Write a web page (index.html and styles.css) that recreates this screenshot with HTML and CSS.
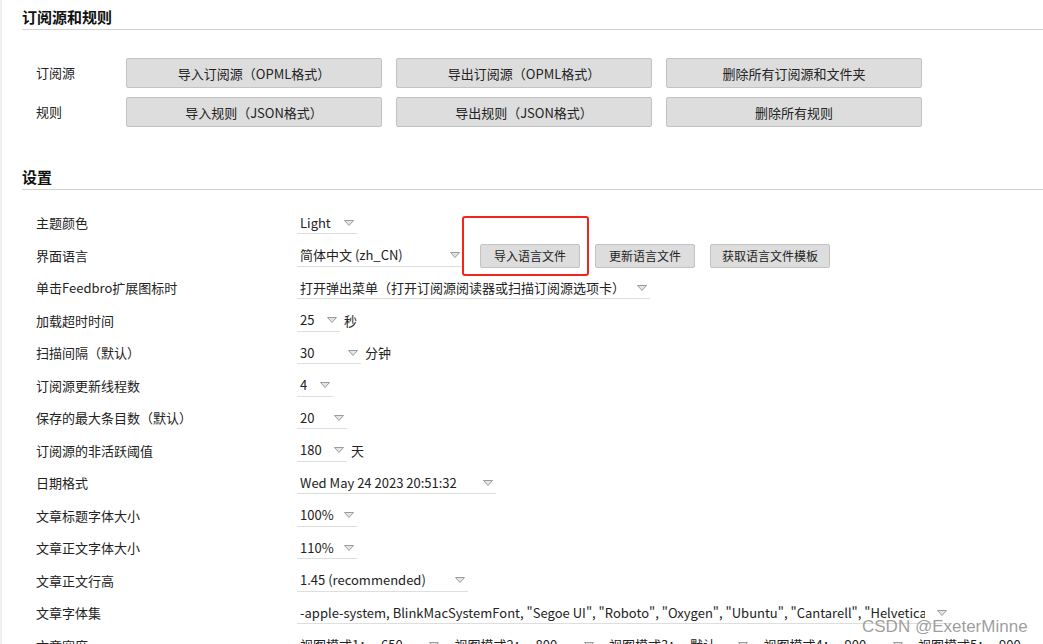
FILE: index.html
```html
<!DOCTYPE html>
<html lang="zh-CN">
<head>
<meta charset="utf-8">
<title>Feedbro 设置</title>
<link rel="stylesheet" href="styles.css">
</head>
<body>
<div class="page">
  <h2 class="section-title">订阅源和规则</h2>
  <div class="io-grid">
    <div class="io-label">订阅源</div>
    <button class="btn btn-lg">导入订阅源（OPML格式）</button>
    <button class="btn btn-lg">导出订阅源（OPML格式）</button>
    <button class="btn btn-lg">删除所有订阅源和文件夹</button>
    <div class="io-label">规则</div>
    <button class="btn btn-lg">导入规则（JSON格式）</button>
    <button class="btn btn-lg">导出规则（JSON格式）</button>
    <button class="btn btn-lg">删除所有规则</button>
  </div>

  <h2 class="section-title section-title--next">设置</h2>
  <div class="settings">
    <div class="row">
      <div class="label">主题颜色</div>
      <div class="ctrl">
        <div class="select w-60"><span class="val">Light</span><svg class="caret" width="10" height="6" viewBox="0 0 10 6"><path d="M0.5 0.5H9.5L5 5.5Z" fill="#e4e4e4" stroke="#9c9c9c"/></svg></div>
      </div>
    </div>
    <div class="row">
      <div class="label">界面语言</div>
      <div class="ctrl">
        <div class="select w-166"><span class="val">简体中文 (zh_CN)</span><svg class="caret" width="10" height="6" viewBox="0 0 10 6"><path d="M0.5 0.5H9.5L5 5.5Z" fill="#e4e4e4" stroke="#9c9c9c"/></svg></div>
        <div class="lang-btns">
          <button class="btn btn-sm">导入语言文件</button>
          <button class="btn btn-sm">更新语言文件</button>
          <button class="btn btn-sm">获取语言文件模板</button>
        </div>
      </div>
    </div>
    <div class="row">
      <div class="label">单击Feedbro扩展图标时</div>
      <div class="ctrl">
        <div class="select w-353"><span class="val">打开弹出菜单（打开订阅源阅读器或扫描订阅源选项卡）</span><svg class="caret" width="10" height="6" viewBox="0 0 10 6"><path d="M0.5 0.5H9.5L5 5.5Z" fill="#e4e4e4" stroke="#9c9c9c"/></svg></div>
      </div>
    </div>
    <div class="row">
      <div class="label">加载超时时间</div>
      <div class="ctrl">
        <div class="select w-43"><span class="val">25</span><svg class="caret" width="10" height="6" viewBox="0 0 10 6"><path d="M0.5 0.5H9.5L5 5.5Z" fill="#e4e4e4" stroke="#9c9c9c"/></svg></div>
        <span class="unit">秒</span>
      </div>
    </div>
    <div class="row">
      <div class="label">扫描间隔（默认）</div>
      <div class="ctrl">
        <div class="select w-64"><span class="val">30</span><svg class="caret" width="10" height="6" viewBox="0 0 10 6"><path d="M0.5 0.5H9.5L5 5.5Z" fill="#e4e4e4" stroke="#9c9c9c"/></svg></div>
        <span class="unit">分钟</span>
      </div>
    </div>
    <div class="row">
      <div class="label">订阅源更新线程数</div>
      <div class="ctrl">
        <div class="select w-36"><span class="val">4</span><svg class="caret" width="10" height="6" viewBox="0 0 10 6"><path d="M0.5 0.5H9.5L5 5.5Z" fill="#e4e4e4" stroke="#9c9c9c"/></svg></div>
      </div>
    </div>
    <div class="row">
      <div class="label">保存的最大条目数（默认）</div>
      <div class="ctrl">
        <div class="select w-50"><span class="val">20</span><svg class="caret" width="10" height="6" viewBox="0 0 10 6"><path d="M0.5 0.5H9.5L5 5.5Z" fill="#e4e4e4" stroke="#9c9c9c"/></svg></div>
      </div>
    </div>
    <div class="row">
      <div class="label">订阅源的非活跃阈值</div>
      <div class="ctrl">
        <div class="select w-50"><span class="val">180</span><svg class="caret" width="10" height="6" viewBox="0 0 10 6"><path d="M0.5 0.5H9.5L5 5.5Z" fill="#e4e4e4" stroke="#9c9c9c"/></svg></div>
        <span class="unit">天</span>
      </div>
    </div>
    <div class="row">
      <div class="label">日期格式</div>
      <div class="ctrl">
        <div class="select w-199"><span class="val">Wed May 24 2023 20:51:32</span><svg class="caret" width="10" height="6" viewBox="0 0 10 6"><path d="M0.5 0.5H9.5L5 5.5Z" fill="#e4e4e4" stroke="#9c9c9c"/></svg></div>
      </div>
    </div>
    <div class="row">
      <div class="label">文章标题字体大小</div>
      <div class="ctrl">
        <div class="select w-60"><span class="val">100%</span><svg class="caret" width="10" height="6" viewBox="0 0 10 6"><path d="M0.5 0.5H9.5L5 5.5Z" fill="#e4e4e4" stroke="#9c9c9c"/></svg></div>
      </div>
    </div>
    <div class="row">
      <div class="label">文章正文字体大小</div>
      <div class="ctrl">
        <div class="select w-60"><span class="val">110%</span><svg class="caret" width="10" height="6" viewBox="0 0 10 6"><path d="M0.5 0.5H9.5L5 5.5Z" fill="#e4e4e4" stroke="#9c9c9c"/></svg></div>
      </div>
    </div>
    <div class="row">
      <div class="label">文章正文行高</div>
      <div class="ctrl">
        <div class="select w-171"><span class="val">1.45 (recommended)</span><svg class="caret" width="10" height="6" viewBox="0 0 10 6"><path d="M0.5 0.5H9.5L5 5.5Z" fill="#e4e4e4" stroke="#9c9c9c"/></svg></div>
      </div>
    </div>
    <div class="row">
      <div class="label">文章字体集</div>
      <div class="ctrl">
        <div class="select w-653"><span class="val val--clip">-apple-system, BlinkMacSystemFont, "Segoe UI", "Roboto", "Oxygen", "Ubuntu", "Cantarell", "Helvetica Neue", sans-serif</span><svg class="caret" width="10" height="6" viewBox="0 0 10 6"><path d="M0.5 0.5H9.5L5 5.5Z" fill="#e4e4e4" stroke="#9c9c9c"/></svg></div>
      </div>
    </div>
    <div class="row">
      <div class="label">文章宽度</div>
      <div class="ctrl view-modes">
        <div class="select w-145"><span class="mode">视图模式1：</span><span class="val">650</span><svg class="caret" width="10" height="6" viewBox="0 0 10 6"><path d="M0.5 0.5H9.5L5 5.5Z" fill="#e4e4e4" stroke="#9c9c9c"/></svg></div>
        <div class="select w-145"><span class="mode">视图模式2：</span><span class="val">800</span><svg class="caret" width="10" height="6" viewBox="0 0 10 6"><path d="M0.5 0.5H9.5L5 5.5Z" fill="#e4e4e4" stroke="#9c9c9c"/></svg></div>
        <div class="select w-145"><span class="mode">视图模式3：</span><span class="val">默认</span><svg class="caret" width="10" height="6" viewBox="0 0 10 6"><path d="M0.5 0.5H9.5L5 5.5Z" fill="#e4e4e4" stroke="#9c9c9c"/></svg></div>
        <div class="select w-145"><span class="mode">视图模式4：</span><span class="val">900</span><svg class="caret" width="10" height="6" viewBox="0 0 10 6"><path d="M0.5 0.5H9.5L5 5.5Z" fill="#e4e4e4" stroke="#9c9c9c"/></svg></div>
        <div class="select w-145"><span class="mode">视图模式5：</span><span class="val">900</span><svg class="caret" width="10" height="6" viewBox="0 0 10 6"><path d="M0.5 0.5H9.5L5 5.5Z" fill="#e4e4e4" stroke="#9c9c9c"/></svg></div>
      </div>
    </div>
  </div>
</div>
<div class="annotation"></div>
<div class="watermark">CSDN @ExeterMinne</div>
</body>
</html>
```

FILE: styles.css
```css
html {
  overflow: hidden;
  height: 100%;
}
body {
  margin: 0;
  background: #ffffff;
  color: #222222;
  font-family: "Noto Sans CJK SC", "Noto Sans", sans-serif;
  font-size: 13px;
  line-height: 18px;
}
.page {
  border-left: 2px solid #efefef;
  padding-left: 20px;
  min-height: 700px;
}
.section-title {
  margin: 0;
  padding: 7px 0 2px;
  font-size: 15px;
  line-height: 20px;
  font-weight: 700;
  color: #111111;
  border-bottom: 1px solid #d2d2d2;
}
.section-title--next {
  margin-top: 33px;
}
.io-grid {
  margin-top: 28px;
  padding-left: 14px;
  display: grid;
  grid-template-columns: 76px 256px 256px 256px;
  grid-auto-rows: 30px;
  column-gap: 14px;
  row-gap: 9px;
  align-items: center;
}
.io-label {
  color: #222222;
}
.btn {
  font-family: inherit;
  color: #222222;
  background: #dddddd;
  border: 1px solid #c3c3c3;
  border-radius: 2px;
  margin: 0;
  padding: 0;
  cursor: pointer;
}
.btn-lg {
  height: 30px;
  font-size: 13px;
}
.btn-sm {
  height: 24px;
  font-size: 12px;
  min-width: 100px;
  padding: 0 11px;
  line-height: 22px;
}
.settings {
  margin-top: 17px;
  padding-left: 14px;
}
.row {
  display: flex;
  align-items: center;
  height: 32.5px;
}
.label {
  width: 261px;
  flex: none;
  white-space: nowrap;
}
.ctrl {
  display: flex;
  align-items: center;
}
.select {
  box-sizing: border-box;
  height: 22px;
  display: flex;
  align-items: center;
  border-bottom: 1px solid #dedede;
  padding: 0 3px 0 3px;
  white-space: nowrap;
  flex: none;
}
.val {
  padding-right: 6px;
}
.val--clip {
  flex: 1;
  min-width: 0;
  overflow: hidden;
  padding-right: 0;
  margin-right: 12px;
}
.caret {
  margin-left: auto;
  flex: none;
  display: block;
}
.unit {
  margin-left: 4px;
}
.w-36 { width: 36px; }
.w-43 { width: 43px; }
.w-50 { width: 50px; }
.w-60 { width: 60px; }
.w-64 { width: 64px; }
.w-145 { width: 145px; }
.w-166 { width: 166px; }
.w-171 { width: 171px; }
.w-199 { width: 199px; }
.w-353 { width: 353px; }
.w-653 { width: 653px; }
.lang-btns {
  display: flex;
  gap: 15px;
  margin-left: 17px;
}
.view-modes {
  gap: 9.5px;
}
.mode {
  width: 81px;
  flex: none;
}
.annotation {
  position: absolute;
  left: 462px;
  top: 216px;
  width: 127px;
  height: 60px;
  box-sizing: border-box;
  border: 2px solid #f5231b;
  border-radius: 3px;
}
.watermark {
  position: absolute;
  left: 862px;
  top: 617px;
  font-family: "Liberation Sans", Arial, sans-serif;
  font-size: 17px;
  line-height: 20px;
  color: rgba(140, 140, 140, 0.85);
  white-space: nowrap;
}
```
